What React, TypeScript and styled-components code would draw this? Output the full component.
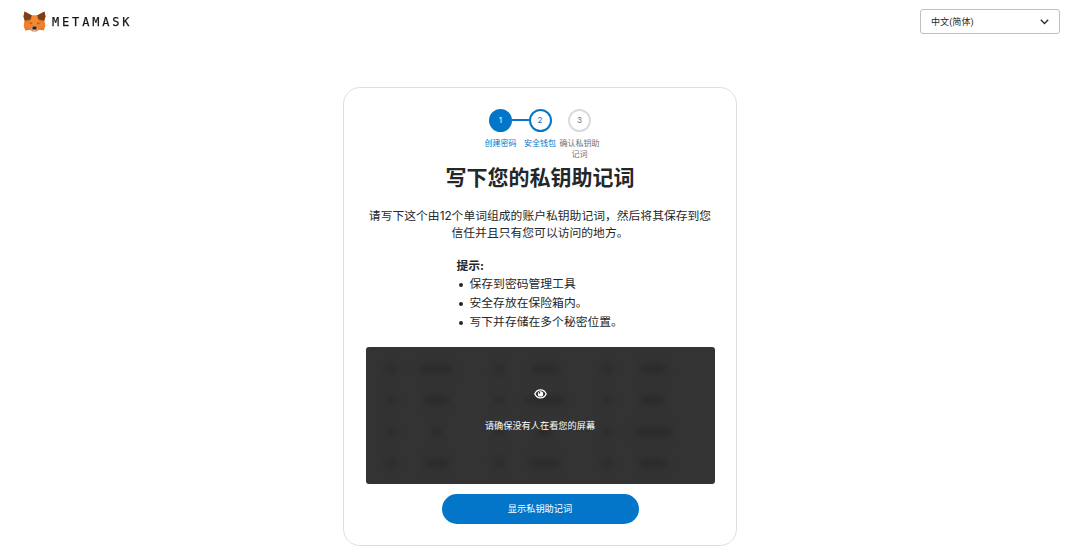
import React from "react";
import styled, { createGlobalStyle } from "styled-components";

const BLUE = "#0376c9";

const GlobalStyle = createGlobalStyle`
  *, *::before, *::after { box-sizing: border-box; }
  body {
    margin: 0;
    background: #fff;
    color: #24272a;
    font-family: Inter, "Noto Sans CJK SC", sans-serif;
  }
`;

const Page = styled.div`
  width: 100%;
  height: 560px;
  overflow: hidden;
  display: flex;
  flex-direction: column;
  align-items: center;
`;

const Header = styled.header`
  width: 100%;
  height: 43px;
  flex: none;
  display: flex;
  align-items: center;
  justify-content: space-between;
  padding: 0 20px 0 23px;
`;

const Logo = styled.div`
  display: flex;
  align-items: center;
  gap: 6px;
`;

const Wordmark = styled.span`
  font: 400 13px/16px "DejaVu Sans Mono", monospace;
  letter-spacing: 3.1px;
  color: #161616;
  -webkit-text-stroke: 0.25px #161616;
  transform: scaleX(0.92);
  transform-origin: left center;
`;

const LanguageSelect = styled.button`
  width: 140px;
  height: 25px;
  display: flex;
  align-items: center;
  justify-content: space-between;
  padding: 1px 10px 0;
  border: 1px solid #bbc0c5;
  border-radius: 3px;
  background: #fff;
  color: #24272a;
  font: 400 9.1px/13px Roboto, "Noto Sans CJK SC", sans-serif;
`;

const Card = styled.main`
  width: 394px;
  height: 459px;
  flex: none;
  margin-top: 44px;
  padding: 21px 21px 0;
  border: 1px solid #dcdfe2;
  border-radius: 17px;
  display: flex;
  flex-direction: column;
  align-items: center;
`;

const Steps = styled.ol`
  list-style: none;
  margin: 0;
  padding: 0;
  height: 54px;
  display: flex;
`;

type StepState = "done" | "current" | "pending";

const Step = styled.li<{ $state: StepState }>`
  width: 39.5px;
  display: flex;
  flex-direction: column;
  align-items: center;
  color: ${(p) => (p.$state === "pending" ? "#6a737d" : BLUE)};
`;

const StepTrack = styled.div`
  width: 100%;
  display: flex;
  align-items: center;
`;

const Connector = styled.span<{ $visible: boolean }>`
  flex: 1;
  height: 2px;
  margin-bottom: 2px;
  background: ${(p) => (p.$visible ? BLUE : "transparent")};
`;

const StepCircle = styled.span<{ $state: StepState }>`
  width: 23px;
  height: 23px;
  display: flex;
  align-items: center;
  justify-content: center;
  padding-bottom: 1px;
  border-radius: 50%;
  border: ${(p) => (p.$state === "pending" ? "2px solid #d9dbdd" : `2px solid ${BLUE}`)};
  background: ${(p) => (p.$state === "done" ? BLUE : "#fff")};
  color: ${(p) => (p.$state === "done" ? "#fff" : "inherit")};
  font-size: 8px;
  line-height: 1;
`;

const StepLabel = styled.span`
  margin-top: 6px;
  font-size: 8px;
  line-height: 11px;
  text-align: center;
  width: 40px;
`;

const Title = styled.h1`
  margin: 0;
  font-size: 21px;
  line-height: 30px;
  font-weight: 700;
  white-space: nowrap;
`;

const Description = styled.p`
  margin: 15px 0 0;
  width: 346px;
  font-size: 11.8px;
  line-height: 17px;
  text-align: center;
`;

const Tips = styled.section`
  width: 167px;
  margin-top: 15px;
  font-size: 11.8px;
  line-height: 19px;
`;

const TipsHeading = styled.h2`
  margin: 0;
  font-size: 11.8px;
  line-height: 18px;
  font-weight: 700;
`;

const TipsList = styled.ul`
  margin: 0;
  padding: 0;
  list-style: none;
`;

const Tip = styled.li`
  display: flex;
  align-items: center;
  white-space: nowrap;
  &::before {
    content: "";
    width: 4px;
    height: 4px;
    margin: 1px 7px 0 2px;
    border-radius: 50%;
    background: #24272a;
  }
`;

const SecretBox = styled.div`
  position: relative;
  width: 349px;
  height: 137px;
  flex: none;
  margin-top: 15px;
  border-radius: 3px;
  background: #333;
  overflow: hidden;
`;

const WordGrid = styled.div`
  height: 100%;
  display: grid;
  grid-template-columns: repeat(3, 108px);
  grid-template-rows: repeat(4, 31.5px);
  padding: 6px 12px;
  filter: blur(3px);
`;

const WordCell = styled.div`
  display: grid;
  grid-template-columns: 26px 1fr;
  align-items: center;
  justify-items: center;
  padding-right: 16px;
`;

const Smudge = styled.span<{ $width: number }>`
  width: ${(p) => p.$width}px;
  height: 8px;
  background: #2a2a2a;
`;

const Shield = styled.div`
  position: absolute;
  inset: 0;
  display: flex;
  flex-direction: column;
  align-items: center;
  padding-top: 41px;
  color: #fff;
  font-size: 9.2px;
  line-height: 13px;
`;

const ShieldText = styled.span`
  margin-top: 19px;
`;

const RevealButton = styled.button`
  width: 197px;
  height: 30px;
  flex: none;
  margin-top: 10px;
  padding: 0 0 2px;
  border: 0;
  border-radius: 15px;
  background: ${BLUE};
  color: #fff;
  font: 400 9.2px/13px Inter, "Noto Sans CJK SC", sans-serif;
`;

const FoxIcon = () => (
  <svg width="23" height="21" viewBox="0 0 23 21" aria-hidden="true">
    <path d="M1.500.5 9 4.500h5l7.500-4 1 5-1 5 .8 4.500-1.600 4.500-4.700-.8-2.500 1.800h-4L7 18.700l-4.700.8L.7 15l.8-4.500-1-5z" fill="#e8792a" />
    <path d="M1.500.5 9 4.500 7.500 8.500 2 9.700.5 5.500zM21.500.5 14 4.500l1.500 4 5.500 1.200 1.500-4.200z" fill="#7b3f1d" />
    <path d="m9 4.500-1.500 5.500 3 6h2l3-6L14 4.500z" fill="#f18a30" />
    <path d="m1.500 11 6 .5 2 2.500-2.200 4.500L.8 15zM21.500 11l-6 .5-2 2.500 2.200 4.500 6.500-3.500z" fill="#ef8130" />
    <path d="m5.500 12.200 3.300-.7.5 1.800zM17.500 12.200l-3.300-.7-.5 1.800z" fill="#b85a28" />
    <path d="m8 18 1.500-2.500h4L15 18l-2 2h-3z" fill="#d5b9a4" />
    <path d="m9.500 16.500.6-1h2.800l.6 1 .2 2H9.300z" fill="#282427" />
  </svg>
);

const ChevronIcon = () => (
  <svg width="9" height="6" viewBox="0 0 9 6" fill="none" aria-hidden="true">
    <path d="m.8.8 3.700 3.700L8.200.8" stroke="#24272a" strokeWidth="1.250" />
  </svg>
);

const EyeIcon = () => (
  <svg width="13" height="12" viewBox="0 0 13 12" fill="none" aria-hidden="true">
    <path d="M.8 6C3.200.6 9.800.6 12.200 6 9.800 11.100 3.200 11.100.8 6z" stroke="#fff" strokeWidth="1.300" />
    <circle cx="6.500" cy="5.900" r="2.700" fill="#fff" />
    <circle cx="5.500" cy="4.900" r="0.800" fill="#333" />
  </svg>
);

const steps: { label: string; state: StepState }[] = [
  { label: "创建密码", state: "done" },
  { label: "安全钱包", state: "current" },
  { label: "确认私钥助记词", state: "pending" },
];

const tips = ["保存到密码管理工具", "安全存放在保险箱内。", "写下并存储在多个秘密位置。"];

const wordWidths = [31, 25, 24, 24, 38, 22, 9, 14, 36, 22, 28, 26];

export default function App() {
  return (
    <Page>
      <GlobalStyle />
      <Header>
        <Logo>
          <FoxIcon />
          <Wordmark>METAMASK</Wordmark>
        </Logo>
        <LanguageSelect>
          中文(简体)
          <ChevronIcon />
        </LanguageSelect>
      </Header>
      <Card>
        <Steps>
          {steps.map((step, i) => (
            <Step key={step.label} $state={step.state}>
              <StepTrack>
                <Connector $visible={i === 1} />
                <StepCircle $state={step.state}>{i + 1}</StepCircle>
                <Connector $visible={i === 0} />
              </StepTrack>
              <StepLabel>{step.label}</StepLabel>
            </Step>
          ))}
        </Steps>
        <Title>写下您的私钥助记词</Title>
        <Description>
          请写下这个由12个单词组成的账户私钥助记词，然后将其保存到您信任并且只有您可以访问的地方。
        </Description>
        <Tips>
          <TipsHeading>提示:</TipsHeading>
          <TipsList>
            {tips.map((tip) => (
              <Tip key={tip}>{tip}</Tip>
            ))}
          </TipsList>
        </Tips>
        <SecretBox>
          <WordGrid>
            {wordWidths.map((width, i) => (
              <WordCell key={i}>
                <Smudge $width={8} />
                <Smudge $width={width} />
              </WordCell>
            ))}
          </WordGrid>
          <Shield>
            <EyeIcon />
            <ShieldText>请确保没有人在看您的屏幕</ShieldText>
          </Shield>
        </SecretBox>
        <RevealButton>显示私钥助记词</RevealButton>
      </Card>
    </Page>
  );
}
